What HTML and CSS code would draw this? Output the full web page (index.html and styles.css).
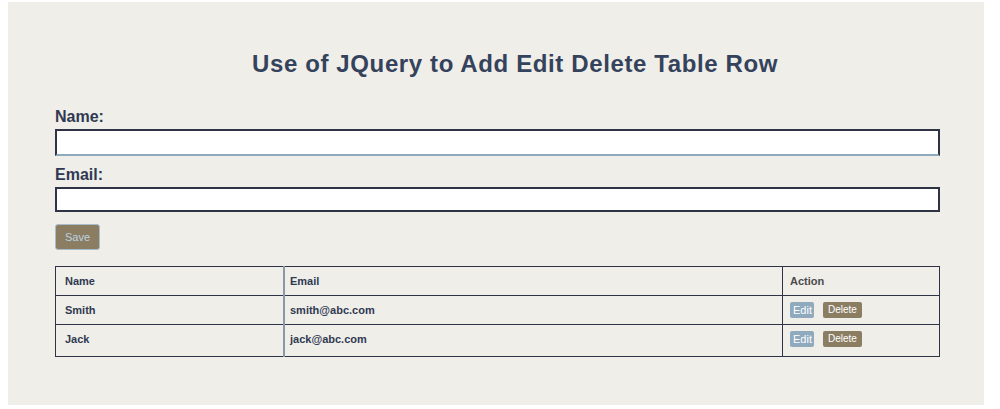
FILE: index.html
```html
<!DOCTYPE html>
<html>
<head>
<meta charset="utf-8">
<link rel="stylesheet" href="styles.css">
</head>
<body>
<div class="page">
  <h1 class="title">Use of JQuery to Add Edit Delete Table Row</h1>
  <form class="form">
    <label class="label">Name:</label>
    <input class="field" type="text">
    <label class="label">Email:</label>
    <input class="field field-email" type="text">
    <button type="button" class="btn-save">Save</button>
  </form>
  <table class="grid">
    <thead>
      <tr><th class="c-name">Name</th><th class="c-email">Email</th><th class="c-action">Action</th></tr>
    </thead>
    <tbody>
      <tr><td class="c-name">Smith</td><td class="c-email">smith@abc.com</td><td class="c-action"><span class="btn btn-edit">Edit</span><span class="btn btn-del">Delete</span></td></tr>
      <tr class="last"><td class="c-name">Jack</td><td class="c-email">jack@abc.com</td><td class="c-action"><span class="btn btn-edit">Edit</span><span class="btn btn-del">Delete</span></td></tr>
    </tbody>
  </table>
</div>
</body>
</html>
```
FILE: styles.css
```css
html, body { margin: 0; padding: 0; background: #ffffff; }
body { font-family: "Liberation Sans", Arial, sans-serif; color: #2f3a52; }
.page {
  margin: 2px 16px 4px 8px;
  height: 403px;
  box-sizing: border-box;
  background: #efeee9;
  padding: 45px 44px 0 47px;
}
.title {
  margin: 0;
  padding-left: 197px;
  font-size: 24px;
  font-weight: bold;
  letter-spacing: 0.62px;
  line-height: 34px;
  color: #34425c;
}
.form { display: flex; flex-direction: column; align-items: flex-start; margin-top: 27px; }
.label { font-size: 16px; font-weight: bold; line-height: 18px; margin-bottom: 3px; }
.field {
  box-sizing: border-box;
  width: 885px;
  height: 27px;
  border: 2px solid #2e3445;
  border-bottom-color: #8fa9bd;
  background: #ffffff;
  margin: 0 0 10px 0;
  padding: 0;
}
.field-email { height: 25px; border-bottom-color: #2e3445; margin-bottom: 12px; }
.btn-save {
  width: 45px;
  height: 26px;
  background: #8b7d62;
  border: 1px solid #a9bccb;
  border-radius: 3px;
  color: #bcd2e3;
  font-family: "Liberation Sans", Arial, sans-serif;
  font-size: 11px;
  padding: 0;
}
.grid {
  margin-top: 16px;
  width: 885px;
  border-collapse: collapse;
  font-size: 11px;
  font-weight: bold;
  color: #2f3a52;
}
.grid th, .grid td {
  border: 1px solid #2e3445;
  text-align: left;
  padding: 0 0 0 9px;
  height: 28px;
}
.grid tr.last td { height: 28px; padding-bottom: 3px; }
.grid .c-name { width: 218px; }
.grid .c-email { width: 492px; padding-left: 5px; border-left: 2px solid #8b98a8; }
.grid .c-action { padding-left: 7px; }
.grid th.c-action { color: #4a4c4c; }
.btn {
  display: inline-block;
  height: 16px;
  line-height: 16px;
  font-size: 10px;
  font-weight: normal;
  color: #ffffff;
  border-radius: 2px;
  vertical-align: middle;
}
.btn-edit { background: #8fa9bd; padding: 0 3px; width: 18px; font-size: 11px; margin-right: 9px; }
.btn-del { background: #8b7d62; padding: 0 5px; }
```
